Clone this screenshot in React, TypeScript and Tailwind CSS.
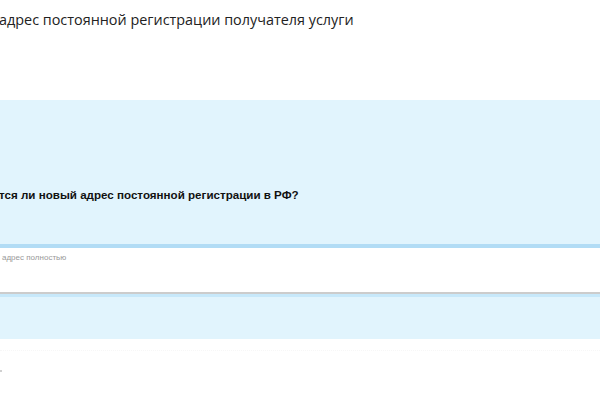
import React from 'react';

export default function App() {
  return (
    <div className="w-[600px] h-[400px] bg-white overflow-hidden relative" style={{ fontFamily: '"Liberation Sans", Arial, sans-serif' }}>
      {/* Page heading, clipped on the left */}
      <div className="h-[100px] pt-[10px]">
        <h2 className="text-[14.4px] leading-[20px] text-[#222] whitespace-nowrap ml-[-1px]" style={{ fontFamily: '"Open Sans", sans-serif' }}>
          адрес постоянной регистрации получателя услуги
        </h2>
      </div>

      {/* Question block */}
      <div className="bg-[#e1f4fd] h-[144px] pt-[87px]">
        <p className="text-[11.6px] leading-[16px] font-bold text-[#111] whitespace-nowrap ml-[-1px]">
          тся ли новый адрес постоянной регистрации в РФ?
        </p>
      </div>

      {/* Address input */}
      <div className="border-t-[4px] border-[#b2dcf5] bg-white h-[48px] px-[2px] pt-[5px]">
        <span className="text-[8px] text-[#9a9a9a] whitespace-nowrap block leading-[10px]">адрес полностью</span>
      </div>
      <div className="h-[2px] bg-[#cccccc]" />
      <div className="h-[3px] bg-[#c7e8fa]" />
      <div className="bg-[#e1f4fd] h-[42px]" />

      <div className="mt-[11px] border-t border-dotted border-[#f7f7f7]" />
      <div className="ml-0 mt-[19px] w-[2px] h-[2px] bg-[#d0d0d0]" />
    </div>
  );
}
